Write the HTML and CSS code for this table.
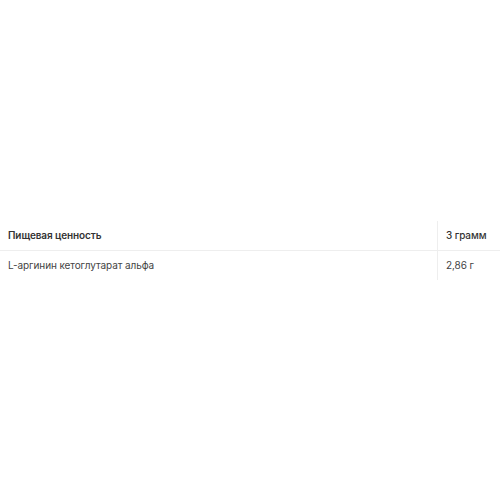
FILE: index.html
```html
<!DOCTYPE html>
<html>
<head>
<meta charset="utf-8">
<link rel="stylesheet" href="styles.css">
</head>
<body>
<div class="page">
  <table class="nutri">
    <tr class="head">
      <td class="name">Пищевая ценность</td>
      <td class="val">3 грамм</td>
    </tr>
    <tr>
      <td class="name">L-аргинин кетоглутарат альфа</td>
      <td class="val">2,86 г</td>
    </tr>
  </table>
</div>
</body>
</html>
```
FILE: styles.css
```css
html, body { margin: 0; padding: 0; background: #fff; }
.page {
  height: 500px;
  display: flex;
  align-items: center;
  font-family: Inter, "Noto Sans", sans-serif;
}
.nutri {
  width: 500px;
  border-collapse: collapse;
  font-size: 10px;
  letter-spacing: -0.1px;
  color: #444;
}
.nutri td {
  height: 29px;
  padding: 0 8px;
  vertical-align: middle;
}
.nutri .val {
  width: 46px;
  border-left: 1px solid #eeeeee;
}
.head td {
  font-weight: 600;
  color: #333;
  border-bottom: 1px solid #eeeeee;
}
.head .val {
  font-weight: 500;
}
```
